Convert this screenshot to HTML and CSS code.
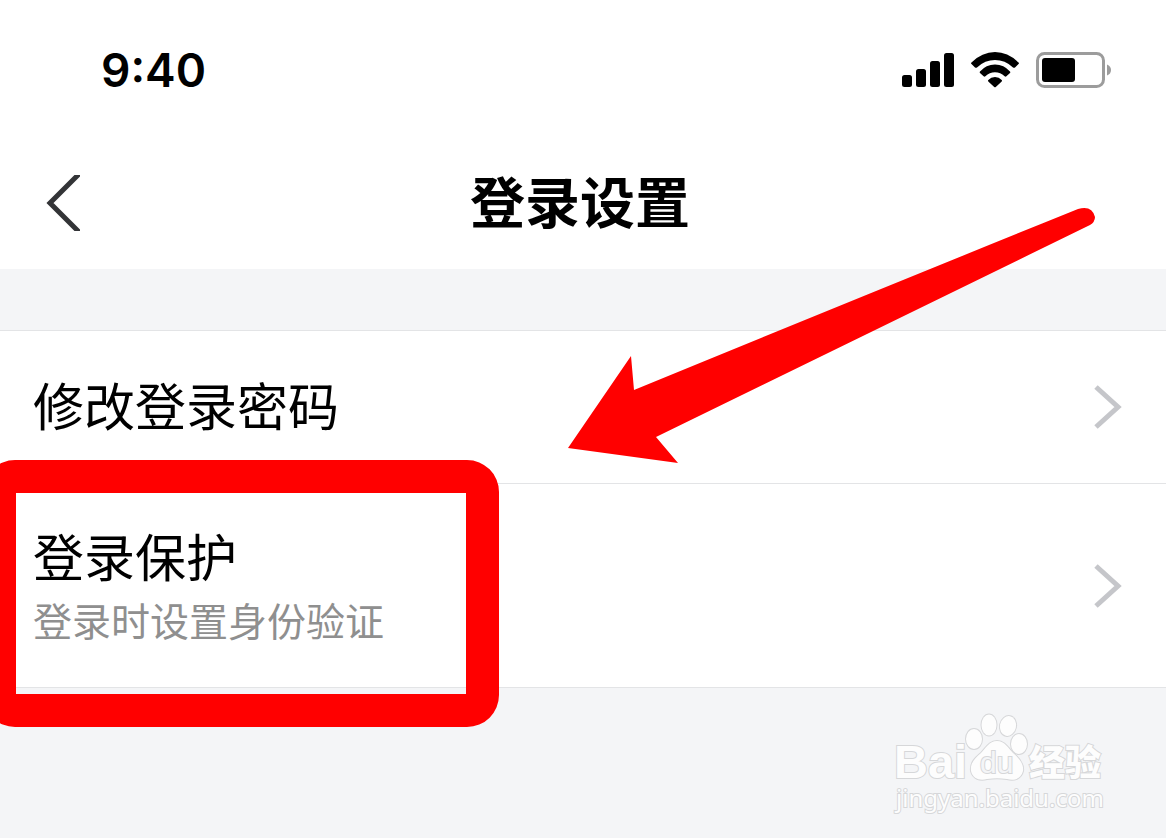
FILE: index.html
```html
<!DOCTYPE html>
<html lang="zh-CN">
<head>
    <meta charset="UTF-8">
    <meta name="viewport" content="width=device-width, initial-scale=1.0">
    <title>登录设置</title>
    <link rel="stylesheet" href="styles.css">
</head>
<body>
    <div class="page">
        <div class="status-bar">
            <span class="time">9:40</span>
            <div class="status-icons">
                <svg class="signal" width="52" height="36" viewBox="0 0 52 36">
                    <rect x="0" y="23" width="10" height="12" rx="2.5"/>
                    <rect x="14" y="17" width="10" height="18" rx="2.5"/>
                    <rect x="28" y="9" width="10" height="26" rx="2.5"/>
                    <rect x="42" y="1" width="10" height="34" rx="2.5"/>
                </svg>
                <svg class="wifi" width="50" height="36" viewBox="0 0 50 36">
                    <path d="M1.5 10.5Q0.6 11 1.5 12L5 15.5Q6 16.2 7 15.4Q15 8 25 8Q35 8 43 15.4Q44 16.2 45 15.5L48.5 12Q49.4 11 48.5 10.5Q38 0 25 0Q12 0 1.5 10.5Z"/>
                    <path d="M10 19.5Q9.2 20.2 10 21L13.6 24.3Q14.5 25 15.4 24.2Q19.5 20.3 25 20.3Q30.5 20.3 34.6 24.2Q35.5 25 36.4 24.3L40 21Q40.8 20.2 40 19.5Q34 12.4 25 12.4Q16 12.4 10 19.5Z"/>
                    <path d="M18.3 28Q17.6 28.7 18.3 29.5L24.2 35Q25 35.7 25.8 35L31.7 29.500Q32.400 28.700 31.700 28Q29 25 25 25Q21 25 18.300 28Z"/>
                </svg>
                <svg class="battery" width="76" height="36" viewBox="0 0 76 36">
                    <rect x="1.5" y="1.5" width="66" height="33" rx="7" fill="none" stroke="#9c9c9c" stroke-width="3"/>
                    <rect x="6" y="6" width="33" height="24" rx="3"/>
                    <path d="M71 12.5Q75 14 75 18Q75 22 71 23.5Z" fill="#9c9c9c"/>
                </svg>
            </div>
        </div>

        <header class="nav">
            <button class="back-btn" type="button" aria-label="返回">
                <svg width="34" height="56" viewBox="0 0 34 56">
                    <path d="M33 -1L4 28L33 57" fill="none" stroke="#333437" stroke-width="5"/>
                </svg>
            </button>
            <h1>登录设置</h1>
        </header>

        <main class="list">
            <a class="item" href="#">
                <span class="text">
                    <span class="label">修改登录密码</span>
                </span>
                <svg class="chevron" width="28" height="44" viewBox="0 0 28 44">
                    <path d="M2 2L24 22L2 42" fill="none" stroke="#c5c6ca" stroke-width="5"/>
                </svg>
            </a>
            <a class="item item-tall" href="#">
                <span class="text">
                    <span class="label">登录保护</span>
                    <span class="desc">登录时设置身份验证</span>
                </span>
                <svg class="chevron" width="28" height="44" viewBox="0 0 28 44">
                    <path d="M2 2L24 22L2 42" fill="none" stroke="#c5c6ca" stroke-width="5"/>
                </svg>
            </a>
        </main>

        <!-- marks drawn over the screen -->
        <div class="frame"></div>
        <svg class="arrow" width="528" height="256" viewBox="0 0 528 256">
            <path d="M0 241L63 149L66 183Q290 91 510 2Q524 -2 527 10Q527 15 522 18L88 230L110 256Z" fill="#ff0000"/>
        </svg>

        <svg class="watermark" width="220" height="110" viewBox="0 0 220 110">
            <g class="wm-shape">
                <text class="wm-bai" x="4" y="66">Bai</text>
                <text class="wm-cn" x="139" y="64">经验</text>
                <text class="wm-url" x="6" y="95">jingyan.baidu.com</text>
                <ellipse cx="84" cy="27" rx="8" ry="10"/>
                <ellipse cx="99" cy="13" rx="7.5" ry="10.5"/>
                <ellipse cx="118" cy="14" rx="8" ry="10" transform="rotate(12 118 14)"/>
                <ellipse cx="129" cy="32" rx="8" ry="10"/>
                <path d="M107 29C99 29 96 36 91 41C85 46 80 51 81 59C83 67 90 69 97 67C104 66 110 66 117 67C124 69 131 67 133 59C134 52 129 46 123 41C118 36 115 29 107 29Z"/>
                <text class="wm-du" x="90" y="61">du</text>
            </g>
        </svg>
    </div>
</body>
</html>
```

FILE: styles.css
```css
* {
    box-sizing: border-box;
}
body {
    margin: 0;
    background-color: #f4f5f7;
    color: #000;
    font-family: "Noto Sans CJK SC", sans-serif;
}
.page {
    position: relative;
    min-height: 100vh;
    overflow: hidden;
}
.status-bar {
    display: flex;
    justify-content: space-between;
    align-items: center;
    height: 140px;
    padding: 0 54px 0 101px;
    background-color: #fff;
}
.time {
    font-family: Inter, sans-serif;
    font-size: 46px;
    font-weight: 600;
}
.status-icons {
    display: flex;
    align-items: center;
    gap: 16px;
}
.nav {
    display: grid;
    grid-template-columns: 80px 1fr 80px;
    align-items: center;
    height: 129px;
    padding: 0 6px 4px 0;
    background-color: #fff;
}
.back-btn {
    display: flex;
    justify-content: flex-end;
    padding: 0;
    border: none;
    background: none;
    cursor: pointer;
}
h1 {
    margin: 0;
    padding-bottom: 8px;
    font-size: 55px;
    font-weight: 700;
    line-height: 80px;
    text-align: center;
}
.list {
    margin-top: 61px;
    border-top: 1px solid #e3e4e6;
    background-color: #fff;
}
.item {
    display: flex;
    justify-content: space-between;
    align-items: center;
    height: 153px;
    padding: 0 44px 0 33px;
    border-bottom: 1px solid #e3e4e6;
    color: #000;
    text-decoration: none;
}
.item-tall {
    height: 204px;
}
.text {
    display: flex;
    flex-direction: column;
    padding-bottom: 6px;
}
.label {
    font-size: 51px;
    font-weight: 400;
    line-height: 72px;
}
.desc {
    color: #8f8f8f;
    font-size: 39px;
    line-height: 56px;
}
.frame {
    position: absolute;
    top: 460px;
    left: -17px;
    width: 516px;
    height: 267px;
    border: 33px solid #ff0000;
    border-radius: 32px;
}
.arrow {
    position: absolute;
    top: 207px;
    left: 568px;
}
.watermark {
    position: absolute;
    top: 712px;
    left: 890px;
}
.wm-shape {
    fill: #fdfdfd;
    stroke: #d6d7d9;
    stroke-width: 2px;
    paint-order: stroke;
}
.wm-bai {
    font-family: "Liberation Sans", sans-serif;
    font-size: 47px;
    font-weight: 700;
}
.wm-cn {
    font-size: 36px;
    font-weight: 900;
}
.wm-url {
    font-family: "Noto Sans", sans-serif;
    font-size: 24px;
}
.wm-du {
    font-family: "Liberation Sans", sans-serif;
    font-size: 30px;
    fill: #f4f5f7;
}
```
